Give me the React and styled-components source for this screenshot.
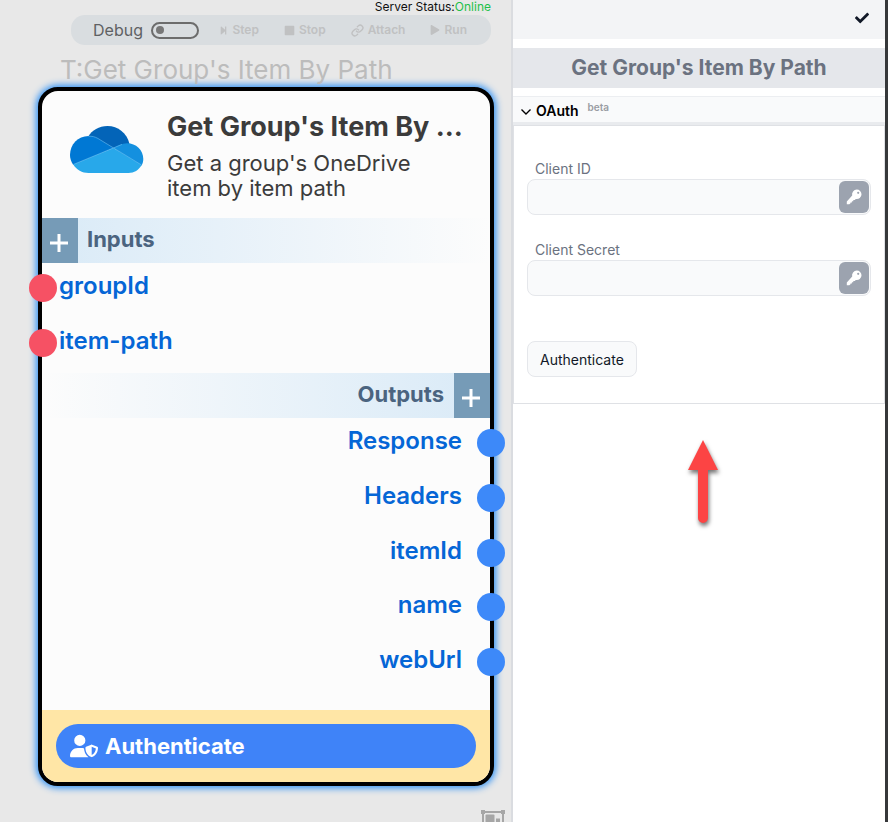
import React from "react";
import styled, { createGlobalStyle } from "styled-components";
import { FaCheck, FaPlay, FaStepForward, FaStop } from "react-icons/fa";
import { FaUserShield } from "react-icons/fa6";
import { Link } from "lucide-react";

const GlobalStyle = createGlobalStyle`
  * { box-sizing: border-box; }
  body {
    margin: 0;
    font-family: Inter, "Liberation Sans", sans-serif;
    background: #ffffff;
    overflow: hidden;
  }
  button, input { font: inherit; margin: 0; }
`;

const Page = styled.div`
  display: flex;
  min-height: 100vh;
`;

const Canvas = styled.main`
  position: relative;
  flex: 1;
  min-width: 0;
  padding: 0 20px 0 38px;
  background: #e8e8e8;
`;

const Status = styled.div`
  height: 15px;
  line-height: 14px;
  font-size: 12px;
  text-align: right;
  color: #111111;
`;

const Online = styled.span`
  color: #1fc04a;
`;

const Toolbar = styled.div`
  display: flex;
  align-items: center;
  height: 30px;
  margin-left: 33px;
  padding: 0 24px 0 22px;
  border-radius: 14px;
  background: #d9dde0;
`;

const DebugLabel = styled.label`
  display: flex;
  align-items: center;
  gap: 8px;
  margin-right: auto;
  font-size: 16px;
  line-height: 28px;
  color: #5f6163;
`;

const Toggle = styled.input`
  appearance: none;
  display: flex;
  align-items: center;
  width: 48px;
  height: 17px;
  padding: 0 3px;
  border: 2px solid #6c6c6c;
  border-radius: 9px;

  &::before {
    content: "";
    width: 8px;
    height: 8px;
    border-radius: 50%;
    background: #777777;
  }
  &:checked::before { margin-left: auto; }
`;

const Actions = styled.div`
  display: flex;
  gap: 25px;
`;

const Action = styled.button`
  display: flex;
  align-items: center;
  gap: 4px;
  padding: 0;
  border: 0;
  background: none;
  font-size: 12px;
  line-height: 28px;
  font-weight: 600;
  color: #c0c1c2;

  svg { width: ${(p) => p.$icon}px; height: ${(p) => p.$icon}px; }
`;

const TaskName = styled.div`
  height: 42px;
  padding-left: 22px;
  line-height: 50px;
  font-size: 26px;
  color: #bcbcbc;
  white-space: nowrap;
`;

const Node = styled.section`
  border: 4px solid #000000;
  border-radius: 20px;
  margin-right: -3px;
  background: #fcfcfc;
  box-shadow: 0 0 7px 2px #2b8ff5;
`;

const NodeHeader = styled.header`
  display: flex;
  align-items: flex-start;
  height: 127px;
  padding: 19px 20px 0 28px;
`;

const NodeLogo = styled.svg`
  flex: none;
  width: 74px;
  height: 48px;
  margin: 16px 23px 0 0;
`;

const NodeText = styled.div`
  flex: 1;
  min-width: 0;
  color: #3b3b3b;
`;

const NodeTitle = styled.h2`
  margin: 0;
  overflow: hidden;
  font-size: 27px;
  line-height: 34px;
  font-weight: 700;
  text-overflow: ellipsis;
  white-space: nowrap;
`;

const NodeDescription = styled.p`
  max-width: 260px;
  margin: 7px 0 0;
  font-size: 22px;
  line-height: 25px;
`;

const Band = styled.div`
  display: flex;
  flex-direction: ${(p) => (p.$end ? "row-reverse" : "row")};
  height: 45px;
  background: linear-gradient(
    ${(p) => (p.$end ? "270deg" : "90deg")},
    #d9eaf7,
    #fcfcfc
  );
`;

const AddButton = styled.button`
  display: grid;
  place-items: center;
  width: 36px;
  padding: 4px 2px 0 0;
  border: 0;
  background: #769bb7;

  svg { width: 18px; height: 18px; }
`;

const BandTitle = styled.h3`
  margin: 0;
  padding: 0 10px 0 9px;
  font-size: 22px;
  line-height: 42px;
  font-weight: 700;
  color: #4b6480;
`;

const Ports = styled.ul`
  display: grid;
  grid-auto-rows: 1fr;
  height: ${(p) => p.$height}px;
  margin: 0;
  padding: 0 0 ${(p) => p.$bottom}px;
  list-style: none;
`;

const Port = styled.li`
  display: flex;
  flex-direction: ${(p) => (p.$end ? "row-reverse" : "row")};
  gap: ${(p) => (p.$end ? 15 : 2)}px;
  margin: ${(p) => (p.$end ? "0 -15px 0 0" : "0 0 0 -13px")};
  font-size: 24px;
  line-height: 46px;
  font-weight: 600;
  color: #0566d6;
`;

const Socket = styled.span`
  flex: none;
  width: 28px;
  height: 28px;
  margin-top: 11px;
  border-radius: 50%;
  background: ${(p) => p.$color};
`;

const NodeFooter = styled.footer`
  padding: 14px;
  border-radius: 0 0 16px 16px;
  background: #ffe6a6;
`;

const NodeAuth = styled.button`
  display: flex;
  align-items: center;
  gap: 7px;
  width: 100%;
  height: 44px;
  padding: 0 14px;
  border: 0;
  border-radius: 22px;
  background: #3f83f8;
  color: #ffffff;
  font-size: 22px;
  font-weight: 700;

  svg { width: 28px; height: 24px; }
`;

const GroupButton = styled.button`
  position: absolute;
  right: 6px;
  bottom: -8px;
  padding: 0;
  border: 0;
  background: none;
  line-height: 0;

  svg { width: 24px; height: 20px; }
`;

const Panel = styled.aside`
  position: relative;
  flex: none;
  width: 377px;
  border-left: 2px solid #dadce0;
  border-right: 3px solid #36383a;
  background: #ffffff;
`;

const PanelBar = styled.div`
  display: flex;
  justify-content: flex-end;
  align-items: center;
  height: 39px;
  padding: 0 16px 3px 0;
  background: #f3f4f6;
`;

const ConfirmButton = styled.button`
  padding: 0;
  border: 0;
  background: none;
  line-height: 0;
  color: #111827;

  svg { width: 14px; height: 14px; }
`;

const PanelTitle = styled.h1`
  margin: 9px 0 8px;
  font-size: 21px;
  line-height: 40px;
  font-weight: 700;
  text-align: center;
  color: #6b7280;
  background: #e5e7eb;
`;

const AuthHeader = styled.button`
  display: flex;
  width: 100%;
  height: 29px;
  padding: 0 8px;
  border: 0;
  border-top: 1px solid #eceef1;
  border-bottom: 3px solid #e9ebee;
  background: #f9fafb;
  font-size: 14px;
  line-height: 28px;
  font-weight: 600;
  color: #000000;

  svg { width: 10px; height: 6px; margin: 12px 5px 0 0; }
`;

const Beta = styled.span`
  margin-left: 9px;
  font-size: 10px;
  line-height: 20px;
  font-weight: 600;
  color: #9a9da3;
`;

const AuthForm = styled.form`
  padding: 34px 13px 26px;
  border: 1px solid #dfe1e5;
`;

const Field = styled.div`
  margin-bottom: 26px;
`;

const FieldLabel = styled.label`
  display: block;
  height: 19px;
  padding-left: 8px;
  font-size: 14px;
  line-height: 18px;
  color: #6b7280;
`;

const FieldBox = styled.div`
  display: flex;
  height: 36px;
  padding: 1px;
  border: 1px solid #e5e7eb;
  border-radius: 8px;
  background: #f9fafb;
`;

const TextInput = styled.input`
  flex: 1;
  min-width: 0;
  padding: 0 10px;
  border: 0;
  border-radius: 8px;
  background: none;
  font-size: 14px;
  color: #111827;
`;

const KeyButton = styled.button`
  display: grid;
  place-items: center;
  width: 30px;
  padding: 0;
  border: 0;
  border-radius: 6px;
  background: #9ca3af;
  color: #ffffff;

  svg { width: 16px; height: 16px; }
`;

const AuthButton = styled.button`
  height: 36px;
  margin-top: 19px;
  padding: 0 12px;
  border: 1px solid #e5e7eb;
  border-radius: 8px;
  background: #f9fafb;
  font-size: 14px;
  color: #111827;
`;

const Arrow = styled.svg`
  position: absolute;
  top: 430px;
  left: 165px;
  width: 50px;
  height: 110px;
  filter: drop-shadow(1px 3px 2px rgba(0, 0, 0, 0.55));
`;

const inputs = ["groupId", "item-path"];
const outputs = ["Response", "Headers", "itemId", "name", "webUrl"];

function PlusIcon() {
  return (
    <svg viewBox="0 0 18 18" stroke="#ffffff" strokeWidth="3">
      <path d="M9 0V18M0 9H18" />
    </svg>
  );
}

function KeyIcon() {
  return (
    <svg viewBox="0 0 16 16" fill="currentColor">
      <path
        fillRule="evenodd"
        d="M10.800 0.500A4.800 4.800 0 0 1 15.500 5.200A4.800 4.800 0 0 1 9.800 10L8.800 10.900H7.300V12.300H5.900V13.500H4.500V14.300L3.300 15.300H0.800V12.500L6.200 6.500A4.800 4.800 0 0 1 10.800 0.500ZM12.200 2.700A1.100 1.100 0 1 0 12.200 4.900A1.100 1.100 0 1 0 12.200 2.700Z"
      />
    </svg>
  );
}

function GroupIcon() {
  return (
    <svg viewBox="0 0 24 20" fill="#a6a6a6">
      <path fill="none" stroke="#a6a6a6" strokeWidth="2" d="M2 2H22V18H2Z" />
      <path d="M0 0H4V4H0ZM20 0H24V4H20ZM0 16H4V20H0ZM20 16H24V20H20Z" />
      <rect x="4.500" y="4.500" width="9" height="8" rx="1" />
      <path d="M15 8.500H19V15.500H9V14H15Z" />
    </svg>
  );
}

function CloudLogo() {
  return (
    <NodeLogo viewBox="0 0 74 48" aria-label="OneDrive" role="img">
      <path fill="#0364b8" d="M18 11C22 4 29 0 37.500 0C48 0 57 7 59.500 18L43.500 23Z" />
      <path fill="#0078d4" d="M3.300 39C1 36 0 32 0 29C0 18.500 8 10 18.500 10C22 10 25 10.800 28 12.500L43.500 22L30 28Z" />
      <path fill="#1490df" d="M43.300 22C48 20 52 17.300 57 17.300C66 17.300 73.300 24 73.300 33C73.300 35.500 72.700 37.500 71.600 39.500L56 31Z" />
      <path fill="#28a8ea" d="M3.300 38.500L43.300 22L71.600 39C69 44 64 47 58.500 47H18.500C12 47 6.500 43.800 3.300 38.500Z" />
      <path fill="none" stroke="#6bbdf0" strokeWidth="0.6" d="M18.500 10.300C22 10 25 10.800 28 12.500L71.600 39M3.300 38.500L43.300 22L52 18.400" />
    </NodeLogo>
  );
}

function SecretField({ id, label }) {
  return (
    <Field>
      <FieldLabel htmlFor={id}>{label}</FieldLabel>
      <FieldBox>
        <TextInput id={id} type="text" />
        <KeyButton type="button" aria-label={`Choose key for ${label}`}>
          <KeyIcon />
        </KeyButton>
      </FieldBox>
    </Field>
  );
}

export default function App() {
  return (
    <Page>
      <GlobalStyle />
      <Canvas>
        <Status>
          Server Status:<Online>Online</Online>
        </Status>
        <Toolbar>
          <DebugLabel>
            Debug
            <Toggle type="checkbox" />
          </DebugLabel>
          <Actions>
            <Action $icon={9}><FaStepForward />Step</Action>
            <Action $icon={11}><FaStop />Stop</Action>
            <Action $icon={13}><Link strokeWidth={2.5} />Attach</Action>
            <Action $icon={10}><FaPlay />Run</Action>
          </Actions>
        </Toolbar>
        <TaskName>T:Get Group's Item By Path</TaskName>
        <Node>
          <NodeHeader>
            <CloudLogo />
            <NodeText>
              <NodeTitle>Get Group's Item By Path</NodeTitle>
              <NodeDescription>Get a group's OneDrive item by item path</NodeDescription>
            </NodeText>
          </NodeHeader>
          <Band>
            <AddButton aria-label="Add input"><PlusIcon /></AddButton>
            <BandTitle>Inputs</BandTitle>
          </Band>
          <Ports $height={110} $bottom={0}>
            {inputs.map((name) => (
              <Port key={name}>
                <Socket $color="#f65164" />
                {name}
              </Port>
            ))}
          </Ports>
          <Band $end>
            <AddButton aria-label="Add output"><PlusIcon /></AddButton>
            <BandTitle>Outputs</BandTitle>
          </Band>
          <Ports $height={292} $bottom={18}>
            {outputs.map((name) => (
              <Port key={name} $end>
                <Socket $color="#3d89f9" />
                {name}
              </Port>
            ))}
          </Ports>
          <NodeFooter>
            <NodeAuth>
              <FaUserShield />
              Authenticate
            </NodeAuth>
          </NodeFooter>
        </Node>
        <GroupButton aria-label="Group"><GroupIcon /></GroupButton>
      </Canvas>
      <Panel>
        <PanelBar>
          <ConfirmButton aria-label="Confirm"><FaCheck /></ConfirmButton>
        </PanelBar>
        <PanelTitle>Get Group's Item By Path</PanelTitle>
        <AuthHeader type="button" aria-expanded="true">
          <svg viewBox="0 0 10 6" fill="none" stroke="#000000" strokeWidth="1.4">
            <path d="M0.500 0.500L5 5L9.500 0.500" />
          </svg>
          OAuth
          <Beta>beta</Beta>
        </AuthHeader>
        <AuthForm onSubmit={(e) => e.preventDefault()}>
          <SecretField id="client-id" label="Client ID" />
          <SecretField id="client-secret" label="Client Secret" />
          <AuthButton type="submit">Authenticate</AuthButton>
        </AuthForm>
        <Arrow viewBox="0 0 50 110" fill="#fc4444">
          <path d="M25 10L40 40H30V88A5 5 0 0 1 20 88V40H10Z" />
        </Arrow>
      </Panel>
    </Page>
  );
}
